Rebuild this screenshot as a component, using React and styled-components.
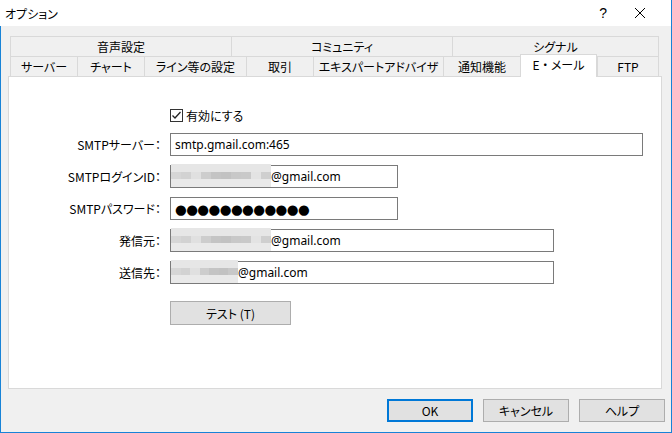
import React from "react";
import styled, { createGlobalStyle } from "styled-components";

const GlobalStyle = createGlobalStyle`
  html, body {
    margin: 0;
    padding: 0;
    background: #ffffff;
  }
  body {
    font-family: "Noto Sans CJK JP", "Noto Sans", sans-serif;
    font-size: 12px;
    color: #000;
  }
`;

const topTabs = [
  { label: "音声設定", w: 221 },
  { label: "コミュニティ", w: 221 },
  { label: "シグナル", w: 207 },
];

const bottomTabs = [
  { label: "サーバー", w: 67 },
  { label: "チャート", w: 67 },
  { label: "ライン等の設定", w: 102 },
  { label: "取引", w: 67 },
  { label: "エキスパートアドバイザ", w: 130 },
  { label: "通知機能", w: 77 },
  { label: "E ・ メール", w: 77, active: true },
  { label: "FTP", w: 62 },
];

const shades = [
  "#d2d2d2", "#c8c8c8", "#dadada", "#c4c4c4", "#cfcfcf", "#e0e0e0",
  "#c9c9c9", "#d6d6d6", "#c2c2c2", "#dcdcdc", "#cdcdcd", "#e3e3e3",
];

const Mosaic = ({ width }) => {
  const cols = Math.ceil(width / 10);
  const cells = [];
  for (let r = 0; r < 3; r++) {
    for (let c = 0; c < cols; c++) {
      const base = shades[(c * 5 + r * 7) % shades.length];
      cells.push(<MosaicCell key={r + "-" + c} style={{ background: r === 0 ? "#e6e6e6" : r === 2 ? "#e9e9e9" : base }} />);
    }
  }
  return (
    <MosaicBox style={{ width, gridTemplateColumns: `repeat(${cols}, 1fr)` }}>
      {cells}
    </MosaicBox>
  );
};

const App = () => {
  return (
    <>
      <GlobalStyle />
      <Window>
        <TitleBar>
          <Title>オプション</Title>
          <TitleButtons>
            <HelpMark>?</HelpMark>
            <CloseIcon viewBox="0 0 12 12">
              <path d="M1 1 L11 11 M11 1 L1 11" stroke="#000" strokeWidth="1" />
            </CloseIcon>
          </TitleButtons>
        </TitleBar>

        <Body>
          <Tabs>
            <TabRow>
              {topTabs.map((t) => (
                <Tab key={t.label} $w={t.w}>{t.label}</Tab>
              ))}
            </TabRow>
            <TabRow>
              {bottomTabs.map((t) => (
                <Tab key={t.label} $w={t.w} $active={t.active}>{t.label}</Tab>
              ))}
            </TabRow>
          </Tabs>

          <Panel>
            <Form>
              <span />
              <CheckRow>
                <CheckBox>
                  <svg width="11" height="11" viewBox="0 0 11 11">
                    <path d="M1.5 5.5 L4 8 L9.5 2" fill="none" stroke="#222" strokeWidth="1.3" />
                  </svg>
                </CheckBox>
                有効にする
              </CheckRow>

              <Label>SMTPサーバー：</Label>
              <Field $w={473}>smtp.gmail.com:465</Field>

              <Label>SMTPログインID：</Label>
              <Field $w={228} $masked>
                <Mosaic width={100} />@gmail.com
              </Field>

              <Label>SMTPパスワード：</Label>
              <Field $w={228}>
                <Dots>●●●●●●●●●●●●</Dots>
              </Field>

              <Label>発信元：</Label>
              <Field $w={384} $masked>
                <Mosaic width={100} />@gmail.com
              </Field>

              <Label>送信先：</Label>
              <Field $w={384} $masked>
                <Mosaic width={67} />@gmail.com
              </Field>

              <span />
              <TestButton>テスト (T)</TestButton>
            </Form>
          </Panel>

          <ButtonBar>
            <DialogButton $primary>OK</DialogButton>
            <DialogButton>キャンセル</DialogButton>
            <DialogButton>ヘルプ</DialogButton>
          </ButtonBar>
        </Body>
      </Window>
    </>
  );
};

export default App;

const Window = styled.div`
  width: 672px;
  height: 433px;
  box-sizing: border-box;
  display: flex;
  flex-direction: column;
  background: #f0f0f0;
  border-right: 1px solid #1883d7;
  border-bottom: 1px solid #1883d7;
`;

const TitleBar = styled.div`
  height: 26px;
  flex: none;
  background: #ffffff;
  display: flex;
  align-items: center;
  justify-content: space-between;
  padding-left: 5px;
`;

const Title = styled.span`
  font-size: 12px;
  font-feature-settings: "palt";
`;

const TitleButtons = styled.div`
  display: flex;
  align-items: center;
  gap: 27px;
  padding-right: 25px;
`;

const HelpMark = styled.span`
  font-family: "Liberation Sans", sans-serif;
  font-size: 14px;
`;

const CloseIcon = styled.svg`
  width: 12px;
  height: 12px;
`;

const Body = styled.div`
  flex: 1;
  display: flex;
  flex-direction: column;
  border-left: 1px solid #1883d7;
  padding: 10px 9px 0 7px;
`;

const Tabs = styled.div`
  display: flex;
  flex-direction: column;
  padding-left: 2px;
  position: relative;
  z-index: 1;
`;

const TabRow = styled.div`
  display: flex;
  height: 20px;
`;

const Tab = styled.div`
  width: ${(p) => p.$w}px;
  box-sizing: border-box;
  height: ${(p) => (p.$active ? "23px" : "20px")};
  margin-top: ${(p) => (p.$active ? "-2px" : "0")};
  background: ${(p) => (p.$active ? "#ffffff" : "#f0f0f0")};
  border-top: 1px solid #d9d9d9;
  border-left: 1px solid #d9d9d9;
  border-right: ${(p) => (p.$active ? "1px solid #d9d9d9" : "none")};
  &:last-child {
    border-right: 1px solid #d9d9d9;
  }
  display: flex;
  align-items: center;
  justify-content: center;
  padding-bottom: ${(p) => (p.$active ? "3px" : "0")};
  font-size: 12px;
  font-feature-settings: "palt";
  white-space: pre;
  position: relative;
  z-index: ${(p) => (p.$active ? 2 : 0)};
`;

const Panel = styled.div`
  height: 313px;
  box-sizing: border-box;
  background: #ffffff;
  border: 1px solid #d9d9d9;
  padding-top: 30px;
`;

const Form = styled.div`
  display: grid;
  grid-template-columns: 152px auto;
  column-gap: 9px;
  row-gap: 9px;
  align-items: center;
  justify-items: start;
`;

const CheckRow = styled.label`
  display: flex;
  align-items: center;
  gap: 3px;
  height: 16px;
  margin-bottom: 1px;
  font-feature-settings: "palt";
`;

const CheckBox = styled.span`
  width: 13px;
  height: 13px;
  box-sizing: border-box;
  border: 1px solid #333333;
  display: flex;
  align-items: center;
  justify-content: center;
  background: #fff;
`;

const Label = styled.span`
  justify-self: end;
  font-size: 12px;
  font-feature-settings: "palt";
  white-space: nowrap;
`;

const Field = styled.div`
  width: ${(p) => p.$w}px;
  height: 23px;
  box-sizing: border-box;
  border: 1px solid #7a7a7a;
  background: #fff;
  display: flex;
  align-items: center;
  padding-left: ${(p) => (p.$masked ? "0" : "4px")};
  font-family: "Noto Sans", "Noto Sans CJK JP", sans-serif;
  font-size: 12px;
  white-space: nowrap;
`;

const MosaicBox = styled.span`
  display: grid;
  grid-template-rows: repeat(3, 1fr);
  height: 23px;
  margin-top: -2px;
  align-self: flex-start;
`;

const MosaicCell = styled.span`
  display: block;
`;

const Dots = styled.span`
  font-family: "DejaVu Sans", sans-serif;
  font-size: 13.5px;
  letter-spacing: -0.6px;
`;

const TestButton = styled.button`
  width: 121px;
  height: 24px;
  margin-top: 8px;
  background: #e1e1e1;
  border: 1px solid #adadad;
  font-family: "Noto Sans CJK JP", sans-serif;
  font-size: 12px;
  font-feature-settings: "palt";
  padding: 0;
  color: #000;
`;

const ButtonBar = styled.div`
  display: flex;
  justify-content: flex-end;
  gap: 10px;
  padding-top: 10px;
  margin-right: -3px;
`;

const DialogButton = styled.button`
  width: 86px;
  height: 23px;
  box-sizing: border-box;
  background: #e1e1e1;
  border: ${(p) => (p.$primary ? "2px solid #0078d7" : "1px solid #adadad")};
  font-family: "Noto Sans CJK JP", sans-serif;
  font-size: 12px;
  font-feature-settings: "palt";
  padding: 0;
  color: #000;
`;
